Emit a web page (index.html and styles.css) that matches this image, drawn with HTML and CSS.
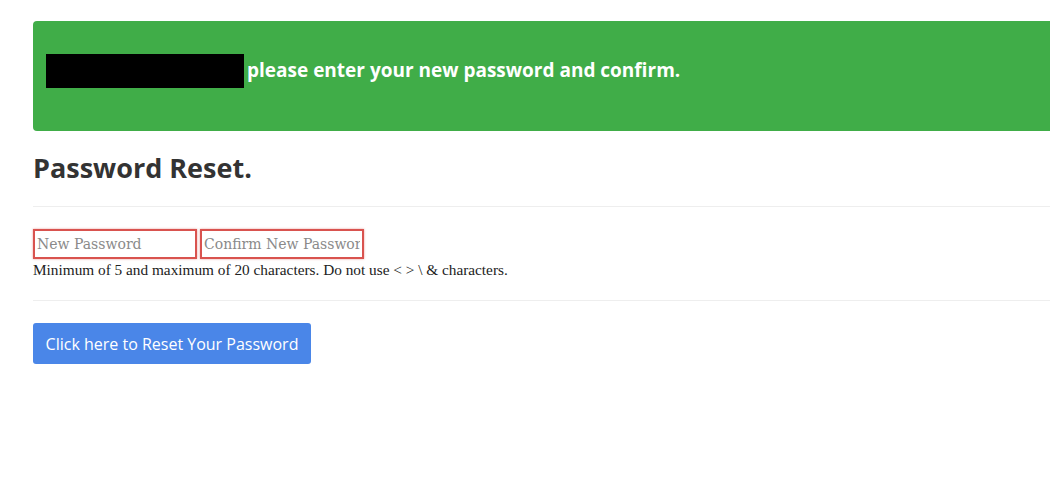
FILE: index.html
```html
<!DOCTYPE html>
<html>
<head>
<meta charset="utf-8">
<link rel="stylesheet" href="styles.css">
</head>
<body>
<div class="page">
  <div class="alert">
    <span class="redact"></span><span class="alert-text">please enter your new password and confirm.</span>
  </div>
  <h1 class="title">Password Reset.</h1>
  <hr class="rule rule-top">
  <div class="fields">
    <input class="field" type="password" placeholder="New Password">
    <input class="field" type="password" placeholder="Confirm New Password">
  </div>
  <p class="hint">Minimum of 5 and maximum of 20 characters. Do not use &lt; &gt; \ &amp; characters.</p>
  <hr class="rule rule-bottom">
  <button class="btn" type="button">Click here to Reset Your Password</button>
</div>
</body>
</html>
```
FILE: styles.css
```css
html, body {
  margin: 0;
  padding: 0;
  background: #fff;
  overflow: hidden;
}
.page {
  padding: 21px 0 0 33px;
  font-family: "Open Sans", Lato, sans-serif;
  color: #333;
}
.alert {
  background: #40ad48;
  border-radius: 4px 0 0 4px;
  height: 110px;
  margin-right: -20px;
  display: flex;
  align-items: center;
  padding: 0 0 10px 13px;
  box-sizing: border-box;
}
.redact {
  display: inline-block;
  width: 198px;
  height: 34px;
  background: #000;
  margin-right: 3px;
}
.alert-text {
  color: #fff;
  font-weight: 700;
  font-size: 19px;
  position: relative;
  top: -1px;
}
.title {
  margin: 20px 0 0 0;
  font-size: 27px;
  font-weight: 700;
  line-height: 34px;
  color: #333;
}
.rule {
  border: 0;
  border-top: 1px solid #eee;
  margin: 0;
}
.rule-top {
  margin-top: 21px;
}
.fields {
  display: flex;
  gap: 3px;
  margin-top: 22px;
}
.field {
  width: 164px;
  height: 30px;
  box-sizing: border-box;
  border: 2px solid #d9534f;
  box-shadow: 0 0 2px rgba(217, 83, 79, 0.6);
  padding: 0 2px;
  font-family: "DejaVu Serif", "Liberation Serif", serif;
  font-size: 14px;
  outline: none;
  background: #fff;
}
.field::placeholder {
  color: #8a8a8a;
}
.hint {
  margin: 2px 0 0 0;
  font-family: "Liberation Serif", serif;
  font-size: 15.3px;
  color: #222;
  line-height: 17px;
}
.rule-bottom {
  margin-top: 22px;
}
.btn {
  margin-top: 22px;
  background: #4a86e8;
  color: #fff;
  border: 0;
  border-radius: 3px;
  width: 278px;
  height: 41px;
  font-family: "Open Sans", Lato, sans-serif;
  font-size: 16px;
  padding: 0;
  cursor: pointer;
}
```
